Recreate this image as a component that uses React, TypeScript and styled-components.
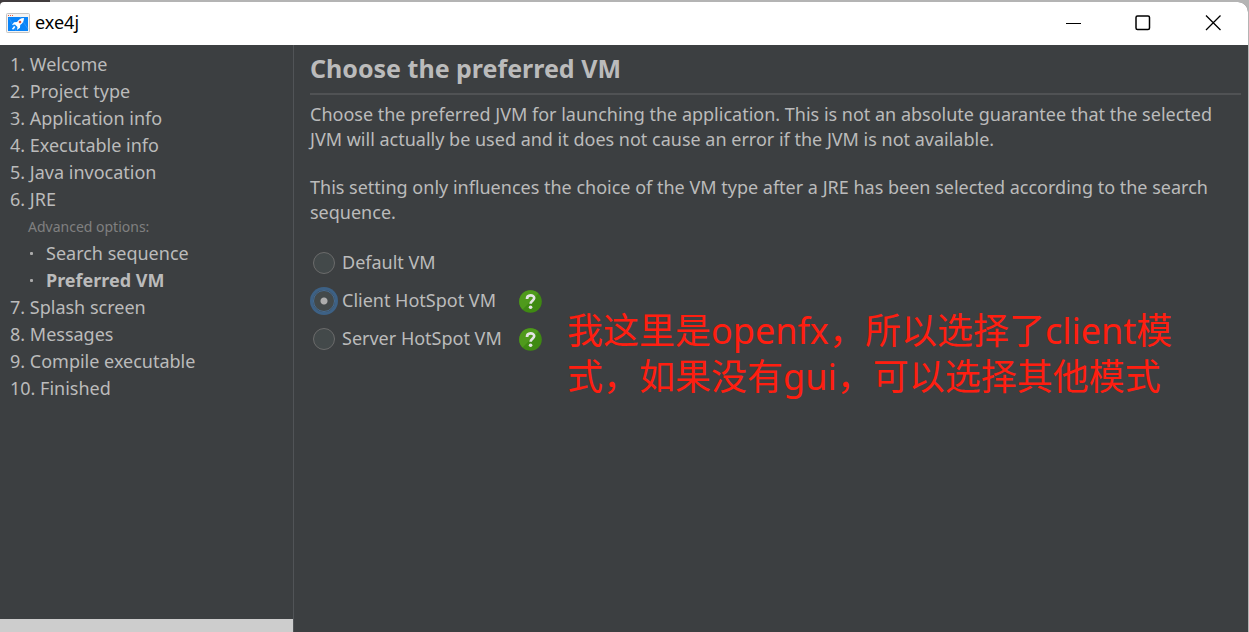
import React, { useState } from "react";
import styled, { createGlobalStyle, css } from "styled-components";

const GlobalStyle = createGlobalStyle`
  *, *::before, *::after { box-sizing: border-box; }
  html, body, #root { height: 100%; }
  body {
    margin: 0;
    background: #b4b4b4;
    font-family: "Noto Sans", "Noto Sans CJK SC", sans-serif;
    font-size: 18px;
    color: #bbbbbb;
  }
`;

const Desktop = styled.div`
  min-height: 100vh;
  display: flex;
  padding: 2px 1px 0 0;
  background: linear-gradient(90deg, #413c3e 50px, #b4b4b4 50px);
`;

const Window = styled.div`
  flex: 1;
  min-width: 0;
  display: flex;
  flex-direction: column;
  background: #3c3f41;
  border-radius: 4px 10px 0 0;
  overflow: hidden;
`;

const TitleBar = styled.header`
  display: flex;
  align-items: center;
  height: 43px;
  padding: 0 0 2px 6px;
  background: #ffffff;
  color: #000000;
`;

const AppTitle = styled.span`
  flex: 1;
  padding-bottom: 2px;
  margin-left: 5px;
  line-height: 24px;
`;

const WindowButton = styled.button`
  display: flex;
  align-items: center;
  justify-content: center;
  width: 70px;
  height: 40px;
  padding: 0;
  border: 0;
  background: transparent;
  color: #000000;
`;

const Body = styled.div`
  flex: 1;
  display: flex;
`;

const Sidebar = styled.nav`
  flex: none;
  display: flex;
  flex-direction: column;
  width: 294px;
  border-right: 1px solid #515457;
`;

const Steps = styled.ol`
  flex: 1;
  margin: 0;
  padding: 6px 10px;
  list-style: none;
`;

const SubSteps = styled.ul`
  margin: 0;
  padding: 0 0 0 18px;
  list-style: none;
`;

const StepLink = styled.a<{ $current?: boolean }>`
  display: block;
  line-height: 27px;
  color: inherit;
  text-decoration: none;
  ${(p) => p.$current && css`font-weight: 700;`}
`;

const SubHeading = styled.div`
  padding-left: 18px;
  font-size: 14px;
  line-height: 27px;
  color: #808080;
`;

const SubStep = styled.li`
  display: flex;
  align-items: center;
  gap: 13px;
  padding-left: 2px;

  &::before {
    content: "";
    width: 3px;
    height: 3px;
    border-radius: 1px;
    background: #aaaaaa;
  }
`;

const FooterStrip = styled.div`
  height: 13px;
  background: #cdcdcd;
`;

const Content = styled.main`
  flex: 1;
  min-width: 0;
  padding: 7px 7px 0 16px;
`;

const Heading = styled.h1`
  margin: 0;
  padding-bottom: 9px;
  border-bottom: 2px solid #505254;
  font-size: 25px;
  line-height: 32px;
  font-weight: 700;
`;

const Description = styled.p`
  margin: 0;
  padding: 7px 0 16px;
  line-height: 25px;
`;

const Choices = styled.div`
  display: flex;
  align-items: flex-start;
  gap: 25px;
  padding-top: 2px;
`;

const Options = styled.fieldset`
  flex: none;
  margin: 0;
  padding: 0;
  border: 0;
`;

const Option = styled.div`
  display: flex;
  align-items: center;
  height: 38px;
  padding-left: 3px;
`;

const Radio = styled.input`
  appearance: none;
  width: 22px;
  height: 22px;
  margin: 2px 0 0;
  border: 1px solid #6b6b6b;
  border-radius: 50%;
  background: #43494a;

  &:checked {
    border-color: #466d94;
    background: radial-gradient(circle, #adadad 3px, #43494a 4px);
    box-shadow: 0 0 0 3px #3d6185;
  }
`;

const OptionLabel = styled.label`
  min-width: 162px;
  margin-left: 7px;
  line-height: 26px;
`;

const HelpButton = styled.button`
  display: flex;
  margin: 2px 0 0 15px;
  padding: 0;
  border: 0;
  background: transparent;
`;

const Note = styled.p`
  margin: 0;
  padding: 65px 48px 0 0;
  color: #ff1e10;
  font-size: 36px;
  line-height: 46px;
`;

const AppIcon = () => (
  <svg width="24" height="20" viewBox="0 0 24 20" aria-hidden="true">
    <rect x="0.5" y="0.5" width="23" height="19" rx="1" fill="#f4f4f4" stroke="#c4c4c4" />
    <path d="M2 2.500h1M4 2.500h1M6 2.500h1" stroke="#f06040" />
    <rect x="2" y="4" width="20" height="14" fill="#0a84f8" />
    <path d="M3 5l7 13M14 4l8 12" stroke="#3b9dfa" strokeWidth="0.7" />
    <path d="M18 5c-3.500 0-5.500 1.800-7 4L8 9.200 6 12l3-.4 2.500 2.400L11 17l3-2.200.2-2.800C16.500 10.500 18 8.500 18 5z" fill="#fff" />
    <path d="M8.800 13.500L6.500 16.200" stroke="#fff" strokeWidth="1.500" />
    <circle cx="14" cy="9" r="1.300" fill="#e0563c" />
  </svg>
);

const HelpIcon = () => (
  <svg width="23" height="23" viewBox="0 0 23 23" aria-hidden="true">
    <circle cx="11.500" cy="11.500" r="11.300" fill="#3f8a12" />
    <path d="M3.500 19.500A11.300 11.300 0 0 1 19.500 3.500z" fill="#4f9a1c" />
    <path d="M8 8.900c0-4.700 7.200-4.500 7.200-.8 0 2.600-3.600 2.700-3.600 5.700" fill="none" stroke="#e4e4e4" strokeWidth="2.700" />
    <circle cx="11.600" cy="17.200" r="1.800" fill="#e4e4e4" />
  </svg>
);

const firstSteps = ["1. Welcome", "2. Project type", "3. Application info", "4. Executable info", "5. Java invocation"];
const lastSteps = ["7. Splash screen", "8. Messages", "9. Compile executable", "10. Finished"];
const vmOptions = [
  { id: "default", label: "Default VM", help: false },
  { id: "client", label: "Client HotSpot VM", help: true },
  { id: "server", label: "Server HotSpot VM", help: true },
];

const Step = ({ label }: { label: string }) => (
  <li>
    <StepLink href="#">{label}</StepLink>
  </li>
);

export default function App() {
  const [vm, setVm] = useState("client");
  return (
    <>
      <GlobalStyle />
      <Desktop>
        <Window>
          <TitleBar>
            <AppIcon />
            <AppTitle>exe4j</AppTitle>
            <WindowButton aria-label="Minimize">
              <svg width="16" height="16"><path d="M1 8.500h15" stroke="currentColor" /></svg>
            </WindowButton>
            <WindowButton aria-label="Maximize">
              <svg width="16" height="16"><rect x="1" y="1" width="13.500" height="13.500" rx="1.500" fill="none" stroke="currentColor" strokeWidth="1.500" /></svg>
            </WindowButton>
            <WindowButton aria-label="Close">
              <svg width="16" height="16"><path d="M1 0.500l14.500 14.500M15.500 0.500l-14.500 14.500" stroke="currentColor" strokeWidth="1.300" /></svg>
            </WindowButton>
          </TitleBar>
          <Body>
            <Sidebar>
              <Steps>
                {firstSteps.map((s) => <Step key={s} label={s} />)}
                <li>
                  <StepLink href="#">6. JRE</StepLink>
                  <SubHeading>Advanced options:</SubHeading>
                  <SubSteps>
                    <SubStep><StepLink href="#">Search sequence</StepLink></SubStep>
                    <SubStep><StepLink href="#" $current aria-current="step">Preferred VM</StepLink></SubStep>
                  </SubSteps>
                </li>
                {lastSteps.map((s) => <Step key={s} label={s} />)}
              </Steps>
              <FooterStrip />
            </Sidebar>
            <Content>
              <Heading>Choose the preferred VM</Heading>
              <Description>
                Choose the preferred JVM for launching the application. This is not an absolute guarantee that the selected JVM will actually be used and it does not cause an error if the JVM is not available.
              </Description>
              <Description>
                This setting only influences the choice of the VM type after a JRE has been selected according to the search sequence.
              </Description>
              <Choices>
                <Options aria-label="Preferred VM">
                  {vmOptions.map((o) => (
                    <Option key={o.id}>
                      <Radio type="radio" name="vm" id={o.id} checked={vm === o.id} onChange={() => setVm(o.id)} />
                      <OptionLabel htmlFor={o.id}>{o.label}</OptionLabel>
                      {o.help && <HelpButton aria-label={"Help on " + o.label}><HelpIcon /></HelpButton>}
                    </Option>
                  ))}
                </Options>
                <Note>我这里是openfx，所以选择了client模式，如果没有gui，可以选择其他模式</Note>
              </Choices>
            </Content>
          </Body>
        </Window>
      </Desktop>
    </>
  );
}
